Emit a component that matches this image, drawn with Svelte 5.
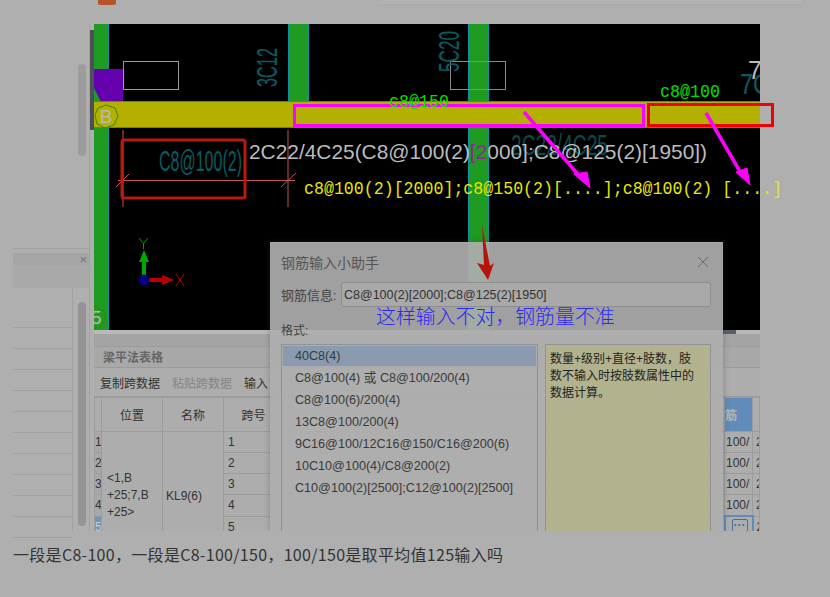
<script>
  const leftRows = Array(11);
  const formats = [
    "40C8(4)",
    "C8@100(4) 或 C8@100/200(4)",
    "C8@100(6)/200(4)",
    "13C8@100/200(4)",
    "9C16@100/12C16@150/C16@200(6)",
    "10C10@100(4)/C8@200(2)",
    "C10@100(2)[2500];C12@100(2)[2500]"
  ];
  const spans = [1, 2, 3, 4, 5, 6];
</script>

<div class="page">
  <div class="top">
    <span class="logo"></span>
    <span class="menu"></span>
  </div>

  <div class="shot">
    <aside class="left">
      <div class="left-top">
        <div class="thumb-top"></div>
      </div>
      <div class="left-head"><span>×</span></div>
      <div class="left-sub"></div>
      <div class="left-body">
        <div class="left-rows">
          {#each leftRows as _}
            <div class="left-row"></div>
          {/each}
        </div>
        <div class="gutter"><div class="thumb"></div></div>
      </div>
    </aside>

    <div class="edge"></div>

    <div class="main">
      <svg class="cad" viewBox="94 24 666 306" width="666" height="306">
        <defs>
          <clipPath id="cadclip"><rect x="94" y="24" width="666" height="306" /></clipPath>
        </defs>
        <g clip-path="url(#cadclip)">
          <rect x="94" y="24" width="666" height="306" fill="#000" />
          <rect x="94" y="24" width="14" height="306" fill="#1f9a22" />
          <rect x="288" y="24" width="20" height="78" fill="#1f9a22" />
          <rect x="468" y="24" width="21" height="306" fill="#1f9a22" />
          <path d="M108.500 24V330M288.500 24V102M308.500 24V102M468.500 24V330M488.500 24V330" stroke="#0b93a0" fill="none" />

          <path d="M94 69H123V102H101L94 88Z" fill="#6400ae" />
          <rect x="123.500" y="61.500" width="55" height="28" fill="none" stroke="#9a9a9a" />
          <rect x="450.500" y="61.500" width="55" height="28" fill="none" stroke="#8a8a8a" />

          <text class="teal" transform="translate(277 87) rotate(-90)" font-size="29" textLength="39" lengthAdjust="spacingAndGlyphs">3C12</text>
          <text class="teal" transform="translate(459 72) rotate(-90)" font-size="29" textLength="41" lengthAdjust="spacingAndGlyphs">5C20</text>

          <rect x="94" y="102" width="666" height="25" fill="#b3b000" />
          <path d="M94 101.500H760M94 127.500H760" stroke="#2d8f86" fill="none" />

          <path d="M106 105L115 108L118 116L114 125L105 128L97 124L95 115L98 108Z" fill="none" stroke="#2f8a00" />
          <text x="106" y="123" class="bubble" text-anchor="middle">B</text>
          <path d="M94 306L103 310L106 318L102 326L94 329" fill="none" stroke="#2f8a00" />
          <text x="91" y="324" class="bubble" font-size="15">5</text>

          <path d="M123 130V207M288 130V207M118 180.500H295M116 187L129 174M281 187L296 173" stroke="#c25757" fill="none" />

          <text class="teal" x="159" y="171" font-size="29" textLength="83" lengthAdjust="spacingAndGlyphs">C8@100(2)</text>
          <text class="teal dim" x="511" y="155" font-size="30" textLength="97" lengthAdjust="spacingAndGlyphs">2C22/4C25</text>

          <text class="teal" x="740" y="94" font-size="29" textLength="30" lengthAdjust="spacingAndGlyphs">7C</text>
          <text class="mark" x="748" y="79" font-size="25" fill="#bbb">7</text>

          <g class="axis">
            <path d="M144 280V258" stroke="#00a800" stroke-width="4" />
            <path d="M144 250L149 262H139Z" fill="#00a800" />
            <path d="M144 280H163" stroke="#b80000" stroke-width="4" />
            <path d="M174 280L162 275V285Z" fill="#b80000" />
            <circle cx="144" cy="280" r="5.500" fill="#000080" />
            <path d="M139 238L143.500 243.500L148 238M143.500 243.500V249" stroke="#00a000" fill="none" />
            <path d="M176 274L184 286M184 274L176 286" stroke="#b80000" fill="none" />
          </g>
        </g>

        <text class="cap" x="249" y="159" textLength="458" lengthAdjust="spacingAndGlyphs">2C22/4C25(C8@100(2)<tspan fill="#8c2a96">[2</tspan>000];C8@125(2)[1950])</text>

        <rect x="294.500" y="105.500" width="349" height="20" fill="none" stroke="#ff00ff" stroke-width="3" />
        <rect x="648.500" y="104.500" width="124" height="21" fill="none" stroke="#f00000" stroke-width="3" />
        <rect x="122" y="140" width="123" height="58" rx="2" fill="none" stroke="#b81a10" stroke-width="3" />

        <text class="mono" x="389" y="107" fill="#00e000" textLength="60" lengthAdjust="spacingAndGlyphs">c8@150</text>
        <text class="mono" x="660" y="97" fill="#00e000" textLength="60" lengthAdjust="spacingAndGlyphs">c8@100</text>
        <text class="mono" x="304" y="194" fill="#e8e800" textLength="478" lengthAdjust="spacingAndGlyphs">c8@100(2)[2000];c8@150(2)[....];c8@100(2) [....]</text>

        <path d="M524 112L582 179M706 113L742 175" stroke="#ff00ff" stroke-width="3.500" fill="none" />
        <path d="M590 188L574 174L587 172ZM750 185L736 172L747 168Z" fill="#ff00ff" stroke="#ff00ff" />
      </svg>

      <div class="strip"><span></span></div>
      <div class="panel">
        <div class="panel-bar"></div>
        <div class="panel-title">梁平法表格</div>
        <div class="toolbar">
          <span>复制跨数据</span>
          <span class="off">粘贴跨数据</span>
          <span>输入</span>
        </div>
        <div class="table-wrap">
          <table>
            <colgroup>
              <col style="width:7px" />
              <col style="width:61px" />
              <col style="width:61px" />
              <col style="width:60px" />
              <col style="width:441px" />
              <col style="width:28px" />
              <col />
            </colgroup>
            <thead>
              <tr>
                <th></th>
                <th>位置</th>
                <th>名称</th>
                <th>跨号</th>
                <th></th>
                <th class="hot">筋</th>
                <th></th>
              </tr>
            </thead>
            <tbody>
              {#each spans as n, i}
                <tr>
                  <td class="num" class:sel={n === 5}>{n}</td>
                  {#if i === 0}
                    <td rowspan="6" class="pos">&lt;1,B<br />+25;7,B<br />+25&gt;</td>
                    <td rowspan="6" class="name">KL9(6)</td>
                  {/if}
                  <td class="span">{n}</td>
                  <td></td>
                  {#if n === 5}
                    <td class="rebar cur"><span class="more">···</span></td>
                  {:else}
                    <td class="rebar">100/</td>
                  {/if}
                  <td class="last">2</td>
                </tr>
              {/each}
            </tbody>
          </table>
        </div>
      </div>
    </div>

    <div class="dialog">
      <div class="dlg-title">
        <span>钢筋输入小助手</span>
        <svg width="12" height="12" viewBox="0 0 12 12"><path d="M1 1L11 11M11 1L1 11" stroke="#6a6a6a" fill="none" /></svg>
      </div>
      <div class="info">
        <span>钢筋信息:</span>
        <div class="input">C8@100(2)[2000];C8@125(2)[1950]</div>
      </div>
      <div class="fmt-label">格式:</div>
      <div class="fmt">
        <ul>
          {#each formats as f, i}
            <li class:on={i === 0}>{f}</li>
          {/each}
        </ul>
        <div class="help">数量+级别+直径+肢数，肢数不输入时按肢数属性中的数据计算。</div>
      </div>
    </div>

    <svg class="red-arrow" width="24" height="58" viewBox="0 0 24 58">
      <path d="M9 0L17 41L21 38L15 55L4 38L11 40Z" fill="#b5140c" />
    </svg>
    <div class="note">这样输入不对，钢筋量不准</div>
  </div>

  <p class="caption">一段是C8-100，一段是C8-100/150，100/150是取平均值125输入吗</p>
</div>

<style>
  :global(body) {
    margin: 0;
    background: #afafaf;
  }

  .page {
    width: 830px;
    height: 597px;
    overflow: hidden;
    background: #afafaf;
    font-family: "Liberation Sans", "Noto Sans CJK SC", sans-serif;
    color: #333;
  }

  .top {
    height: 24px;
    position: relative;
  }

  .logo {
    position: absolute;
    left: 98px;
    top: -6px;
    width: 18px;
    height: 11px;
    border-radius: 2px;
    background: #b5532a;
  }

  .menu {
    position: absolute;
    left: 380px;
    top: -4px;
    width: 423px;
    height: 8px;
    background: #b3b3b3;
    box-shadow: 0 1px 3px #a8a8a8;
  }

  .shot {
    position: relative;
    display: flex;
    width: 747px;
    height: 507px;
    margin-left: 13px;
  }

  .left {
    width: 77px;
    display: flex;
    flex-direction: column;
    border-right: 1px solid #a2a2a2;
    box-sizing: border-box;
  }

  .left-top {
    height: 225px;
    border-bottom: 1px solid #a2a2a2;
    box-sizing: border-box;
    position: relative;
  }

  .thumb-top {
    position: absolute;
    left: 65px;
    top: 40px;
    width: 8px;
    height: 92px;
    border-radius: 4px;
    background: #9c9c9c;
  }

  .left-head {
    margin-top: 4px;
    height: 12px;
    background: #a5a5a5;
    display: flex;
    justify-content: flex-end;
    align-items: center;
    font-size: 13px;
    color: #777;
    padding-right: 2px;
  }

  .left-sub {
    height: 23px;
    background: #a9a9a9;
  }

  .left-body {
    flex: 1;
    display: flex;
    min-height: 0;
  }

  .left-rows {
    width: 59px;
    border-right: 1px solid #a0a0a0;
    padding-top: 19px;
  }

  .left-row {
    height: 20px;
    border-bottom: 1px solid #a0a0a0;
  }

  .gutter {
    flex: 1;
    padding: 14px 2px 5px 5px;
  }

  .thumb {
    width: 8px;
    height: 224px;
    border-radius: 4px;
    background: #949494;
  }

  .edge {
    width: 4px;
    height: 100px;
    margin-top: 6px;
    background: #4b5056;
  }

  .main {
    width: 666px;
    display: flex;
    flex-direction: column;
    min-width: 0;
  }

  .cad {
    display: block;
    overflow: visible;
    flex: none;
  }

  .teal {
    font-family: "Liberation Sans", sans-serif;
    font-weight: normal;
    fill: #0a5c60;
  }

  .dim {
    fill: #084a4d;
  }

  .bubble {
    font-family: "Liberation Sans", sans-serif;
    font-size: 19px;
    fill: #b9b9b9;
  }

  .cap {
    font-family: "Liberation Sans", sans-serif;
    font-size: 21px;
    fill: #bcbcbc;
  }

  .mark {
    font-family: "Liberation Sans", sans-serif;
  }

  .mono {
    font-family: "Liberation Mono", monospace;
    font-size: 18px;
  }

  .strip {
    height: 4px;
    background: #b9b9b9;
    flex: none;
    padding-left: 629px;
  }

  .strip span {
    display: block;
    width: 13px;
    height: 4px;
    background: #5a6068;
  }

  .panel {
    flex: 1;
    min-height: 0;
    overflow: hidden;
    display: flex;
    flex-direction: column;
    background: #adadad;
  }

  .panel-bar {
    height: 12px;
    background: #a4a4a4;
    flex: none;
  }

  .panel-title {
    height: 22px;
    line-height: 22px;
    padding-left: 9px;
    background: #a8a8a8;
    border-top: 1px solid #9c9c9c;
    border-bottom: 1px solid #9c9c9c;
    box-sizing: border-box;
    font-size: 12px;
    font-weight: bold;
    color: #666;
    flex: none;
  }

  .toolbar {
    height: 28px;
    display: flex;
    align-items: center;
    gap: 12px;
    padding-left: 6px;
    font-size: 12px;
    color: #333;
    flex: none;
  }

  .off {
    color: #858585;
  }

  .table-wrap {
    flex: 1;
    min-height: 0;
    overflow: hidden;
    border-top: 1px solid #9c9c9c;
  }

  table {
    border-collapse: collapse;
    table-layout: fixed;
    width: 666px;
    font-size: 12px;
    color: #333;
  }

  th,
  td {
    border: 1px solid #9c9c9c;
    padding: 0;
    height: 20px;
    overflow: hidden;
    white-space: nowrap;
  }

  th {
    height: 33px;
    font-weight: normal;
  }

  .hot {
    background: #5f8cba;
    color: #b5b5b5;
    font-weight: bold;
    text-align: left;
  }

  .num {
    background: #a8a8a8;
    font-size: 12px;
    text-align: left;
  }

  .num.sel {
    background: #6b96c2;
    color: #ccc;
  }

  .pos {
    white-space: normal;
    line-height: 17px;
    padding-left: 5px;
  }

  .name {
    padding-left: 3px;
  }

  .span {
    padding-left: 4px;
  }

  .rebar {
    text-align: left;
    padding-left: 1px;
  }

  .cur {
    border: 2px solid #5f8cba;
    text-align: right;
    padding-right: 4px;
    vertical-align: top;
  }

  .more {
    display: block;
    width: 16px;
    height: 13px;
    margin: 2px 0 0 5px;
    line-height: 11px;
    border: 1px solid #45709c;
    border-radius: 2px;
    text-align: center;
    color: #45709c;
    font-weight: bold;
    box-sizing: border-box;
  }

  .last {
    padding-left: 3px;
  }

  .dialog {
    position: absolute;
    left: 257px;
    top: 218px;
    width: 453px;
    height: 289px;
    box-sizing: border-box;
    padding: 0 12px 0 11px;
    background: rgba(174, 174, 174, 0.92);
    border-top: 1px solid #a9a9a9;
    box-shadow: 0 0 6px rgba(60, 60, 60, 0.35);
    clip-path: inset(-8px -8px 0 -8px);
    overflow: hidden;
    font-family: "Liberation Sans", "Noto Sans CJK SC", sans-serif;
  }

  .dlg-title {
    height: 37px;
    display: flex;
    justify-content: space-between;
    align-items: center;
    font-size: 14px;
    color: #555;
    padding-right: 2px;
  }

  .info {
    display: flex;
    align-items: center;
    margin-top: 2px;
    font-size: 12.500px;
    color: #444;
  }

  .info span {
    width: 60px;
    font-size: 13px;
    flex: none;
  }

  .input {
    flex: 1;
    height: 25px;
    line-height: 24px;
    box-sizing: border-box;
    border: 1px solid #8e8e8e;
    border-radius: 3px;
    padding-left: 2px;
    background: #a9a9a9;
    color: #333;
  }

  .fmt-label {
    margin-top: 14px;
    height: 23px;
    font-size: 12px;
    color: #444;
  }

  .fmt {
    display: flex;
    gap: 7px;
    height: 200px;
  }

  ul {
    width: 257px;
    margin: 0;
    padding: 1px;
    list-style: none;
    box-sizing: border-box;
    border: 1px solid #929292;
    font-size: 12.600px;
    color: #3a3a3a;
  }

  li {
    height: 22px;
    line-height: 20px;
    padding-left: 12px;
  }

  li.on {
    height: 20px;
    margin-bottom: 2px;
    background: #8a9bb0;
  }

  .help {
    flex: 1;
    box-sizing: border-box;
    border: 1px solid #939393;
    background: #b2b28f;
    padding: 6px 12px 3px 4px;
    font-size: 12px;
    line-height: 17px;
    color: #222;
  }

  .red-arrow {
    position: absolute;
    left: 460px;
    top: 201px;
  }

  .note {
    position: absolute;
    left: 363px;
    top: 279px;
    font-family: "Noto Sans CJK SC", sans-serif;
    font-size: 19.900px;
    font-weight: 300;
    line-height: 26px;
    color: #2a2af0;
    white-space: nowrap;
  }

  .caption {
    margin: 13px 0 0 13px;
    font-size: 16px;
    letter-spacing: 0.3px;
    line-height: 20px;
    color: #333;
    font-family: "Noto Sans CJK SC", sans-serif;
  }
</style>
